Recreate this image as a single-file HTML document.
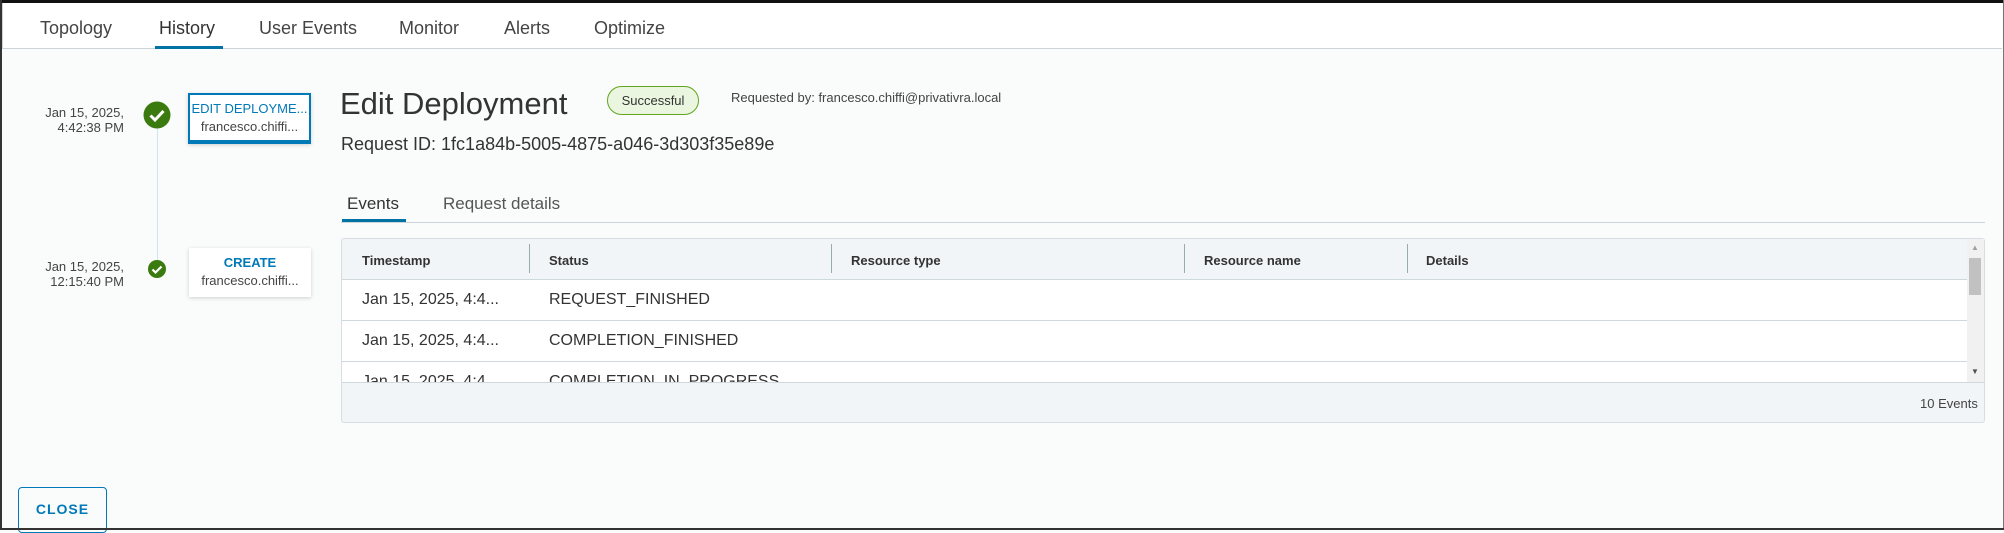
<!DOCTYPE html>
<html><head><meta charset="utf-8"><style>
*{margin:0;padding:0;box-sizing:border-box}
body{width:2004px;height:530px;overflow:hidden;background:#fafcfc;font-family:"Liberation Sans",sans-serif;color:#333;position:relative}
.a{position:absolute;white-space:nowrap}
.top{left:0;top:0;width:2004px;height:3px;background:#111}
.lft{left:0;top:0;width:2px;height:530px;background:#333}
.rgt{right:0;top:0;width:1px;height:530px;background:#777}
.bot{left:0;bottom:0;width:2004px;height:2px;background:#333}
.tabbar{left:2px;top:3px;width:2000px;height:46px;background:#fff;border-bottom:1px solid #ccd4d8;border-left:1px solid #ccd4d8}
.tab{top:18px;font-size:18px;color:#444}
.card{background:#fff;box-shadow:0 1px 4px rgba(0,0,0,.18);text-align:center;font-size:13px}
.th{font-size:13px;font-weight:bold;color:#333;top:253px}
.sep{top:244px;width:1px;height:29px;background:#9aa}
.td{font-size:16px;color:#333}
</style></head><body>
<div class="a tabbar"></div>
<div class="a tab" style="left:40px">Topology</div>
<div class="a tab" style="left:159px;color:#333">History</div>
<div class="a" style="left:155px;top:46px;width:68px;height:3px;background:#0072a3"></div>
<div class="a tab" style="left:259px">User Events</div>
<div class="a tab" style="left:399px">Monitor</div>
<div class="a tab" style="left:504px">Alerts</div>
<div class="a tab" style="left:594px">Optimize</div>

<div class="a" style="left:157px;top:128px;width:1px;height:134px;background:#cfe6f0"></div>
<div class="a" style="left:20px;top:105px;width:104px;text-align:right;font-size:13px;line-height:15px;color:#444">Jan 15, 2025,<br>4:42:38 PM</div>
<svg class="a" style="left:143px;top:101px" width="28" height="28" viewBox="0 0 28 28"><circle cx="14" cy="14" r="13.5" fill="#3b7a0f"/><path d="M7.5 14.5l4.5 4.5 8.5-9" stroke="#fff" stroke-width="3" fill="none"/></svg>
<div class="a card" style="left:188px;top:93px;width:123px;height:51px;border:2px solid #0079b8;border-bottom:4px solid #0079b8">
<div style="color:#0079b8;margin-top:6px;font-size:13px">EDIT DEPLOYME...</div><div style="color:#444;margin-top:3px">francesco.chiffi...</div></div>
<div class="a" style="left:20px;top:259px;width:104px;text-align:right;font-size:13px;line-height:15px;color:#444">Jan 15, 2025,<br>12:15:40 PM</div>
<svg class="a" style="left:148px;top:260px" width="18" height="18" viewBox="0 0 18 18"><circle cx="9" cy="9" r="9" fill="#3b7a0f"/><path d="M4.5 9.5l3 3 6-6" stroke="#fff" stroke-width="2.2" fill="none"/></svg>
<div class="a card" style="left:189px;top:248px;width:122px;height:49px">
<div style="color:#0079b8;margin-top:7px;font-weight:bold">CREATE</div><div style="color:#444;margin-top:3px">francesco.chiffi...</div></div>

<div class="a" style="left:340px;top:86px;font-size:31px;color:#333">Edit Deployment</div>
<div class="a" style="left:607px;top:86px;width:92px;height:29px;border:1px solid #62a420;background:#eaf6df;border-radius:15px;font-size:13px;text-align:center;line-height:27px;color:#333">Successful</div>
<div class="a" style="left:731px;top:90px;font-size:13px;color:#444">Requested by: francesco.chiffi@privativra.local</div>
<div class="a" style="left:341px;top:134px;font-size:18px;color:#333">Request ID: 1fc1a84b-5005-4875-a046-3d303f35e89e</div>

<div class="a" style="left:347px;top:194px;font-size:17px;color:#333">Events</div>
<div class="a" style="left:443px;top:194px;font-size:17px;color:#555">Request details</div>
<div class="a" style="left:341px;top:222px;width:1644px;height:1px;background:#ccd4d8"></div>
<div class="a" style="left:342px;top:219px;width:64px;height:3px;background:#0072a3"></div>

<div class="a" style="left:341px;top:238px;width:1644px;height:185px;border:1px solid #d7dde0;border-radius:3px;background:#f1f5f8"></div>
<div class="a" style="left:342px;top:279px;width:1625px;height:103px;background:#fff"></div>
<div class="a" style="left:342px;top:279px;width:1625px;height:1px;background:#cfd8dc"></div>
<div class="a" style="left:342px;top:320px;width:1625px;height:1px;background:#cfd8dc"></div>
<div class="a" style="left:342px;top:361px;width:1625px;height:1px;background:#cfd8dc"></div>
<div class="a" style="left:342px;top:382px;width:1642px;height:1px;background:#cfd8dc"></div>
<div class="a sep" style="left:529px"></div><div class="a sep" style="left:831px"></div><div class="a sep" style="left:1184px"></div><div class="a sep" style="left:1407px"></div>
<div class="a th" style="left:362px">Timestamp</div>
<div class="a th" style="left:549px">Status</div>
<div class="a th" style="left:851px">Resource type</div>
<div class="a th" style="left:1204px">Resource name</div>
<div class="a th" style="left:1426px">Details</div>
<div class="a td" style="left:362px;top:291px">Jan 15, 2025, 4:4...</div>
<div class="a td" style="left:549px;top:291px">REQUEST_FINISHED</div>
<div class="a td" style="left:362px;top:332px">Jan 15, 2025, 4:4...</div>
<div class="a td" style="left:549px;top:332px">COMPLETION_FINISHED</div>
<div class="a" style="left:342px;top:362px;width:1625px;height:20px;overflow:hidden"><div class="a td" style="left:20px;top:11px">Jan 15, 2025, 4:4...</div><div class="a td" style="left:207px;top:11px">COMPLETION_IN_PROGRESS</div></div>
<div class="a" style="left:1967px;top:239px;width:17px;height:143px;background:#f1f1f1"></div>
<div class="a" style="left:1969px;top:258px;width:12px;height:37px;background:#c1c1c1"></div>
<div class="a" style="left:1971px;top:243px;font-size:8px;color:#a0a0a0">▲</div>
<div class="a" style="left:1971px;top:367px;font-size:8px;color:#505050">▼</div>
<div class="a" style="left:1920px;top:396px;font-size:13px;color:#444">10 Events</div>

<div class="a" style="left:18px;top:487px;width:89px;height:46px;border:1px solid #0079b8;border-radius:4px;color:#0079b8;font-weight:bold;font-size:14px;letter-spacing:1px;text-align:center;line-height:42px">CLOSE</div>

<div class="a top"></div><div class="a lft"></div><div class="a rgt"></div><div class="a bot"></div>
</body></html>
